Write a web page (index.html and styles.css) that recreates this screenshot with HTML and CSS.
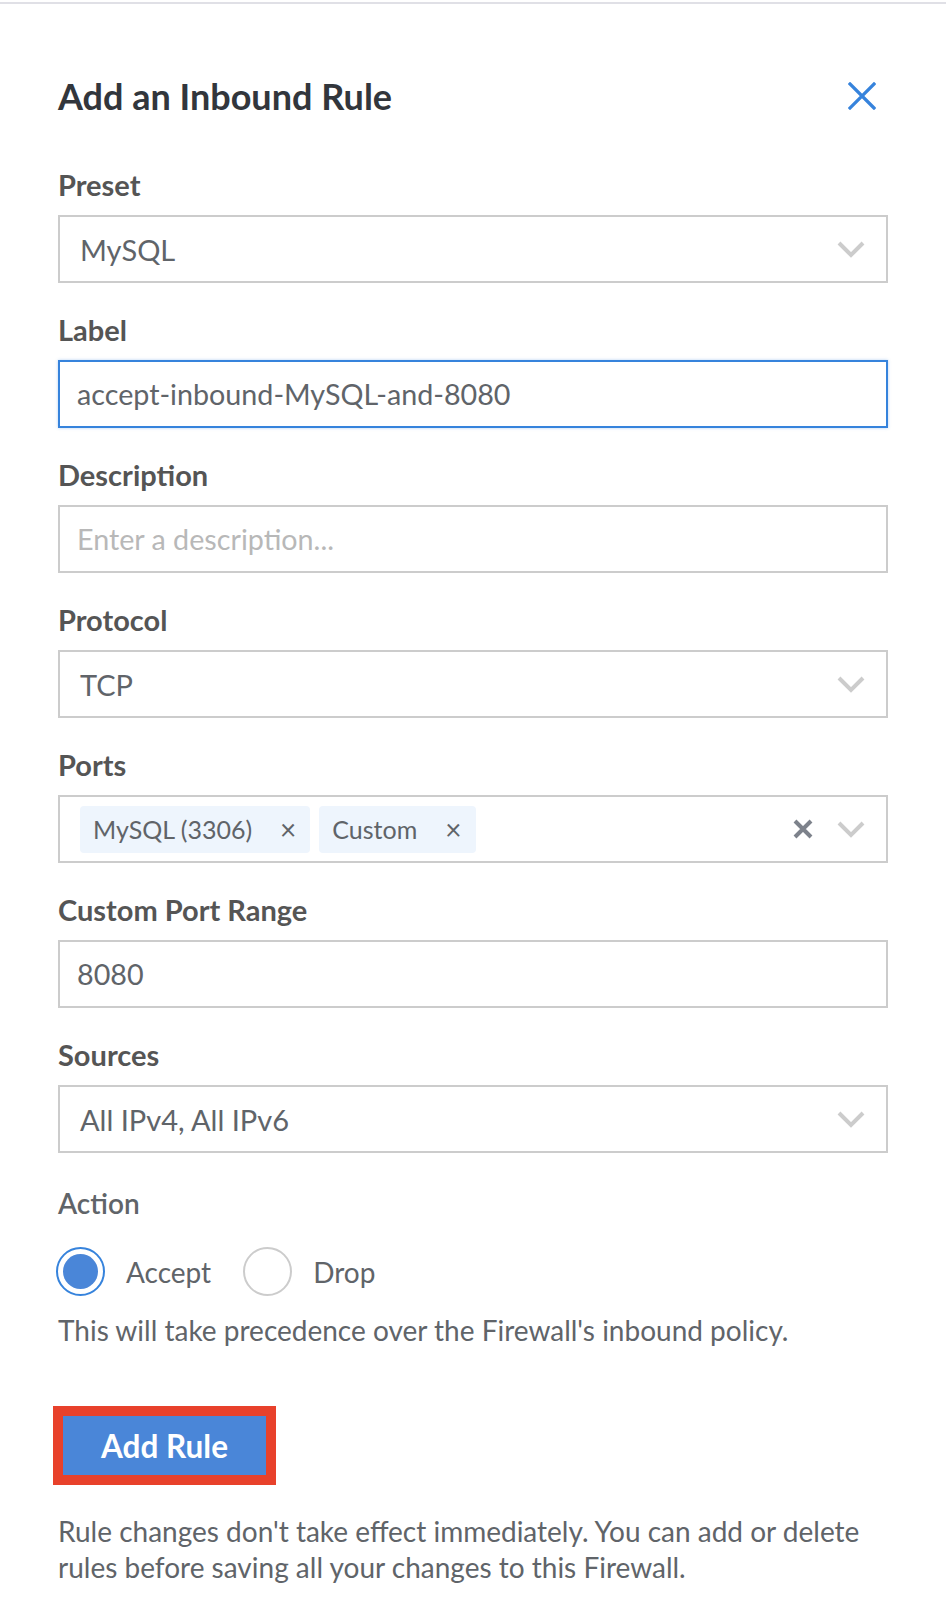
FILE: index.html
```html
<!DOCTYPE html>
<html>
<head>
<meta charset="utf-8">
<link rel="stylesheet" href="styles.css">
</head>
<body>
<div class="topline"></div>
<div class="drawer">
  <div class="header">
    <h2 class="title">Add an Inbound Rule</h2>
    <button class="close" aria-label="Close">
      <svg width="28" height="28" viewBox="0 0 28 28"><path d="M2 2 L26 26 M26 2 L2 26" stroke="#3683dc" stroke-width="3.2" stroke-linecap="square" fill="none"/></svg>
    </button>
  </div>

  <div class="field first">
    <div class="label">Preset</div>
    <div class="select">
      <span class="value">MySQL</span>
      <svg class="chev" width="28" height="18" viewBox="0 0 28 18"><path d="M2 3 L14 15 L26 3" stroke="#cccccc" stroke-width="4" fill="none"/></svg>
    </div>
  </div>

  <div class="field">
    <div class="label">Label</div>
    <div class="input focused"><span class="value">accept-inbound-MySQL-and-8080</span></div>
  </div>

  <div class="field">
    <div class="label">Description</div>
    <div class="input"><span class="placeholder">Enter a description...</span></div>
  </div>

  <div class="field">
    <div class="label">Protocol</div>
    <div class="select">
      <span class="value">TCP</span>
      <svg class="chev" width="28" height="18" viewBox="0 0 28 18"><path d="M2 3 L14 15 L26 3" stroke="#cccccc" stroke-width="4" fill="none"/></svg>
    </div>
  </div>

  <div class="field">
    <div class="label">Ports</div>
    <div class="select multi">
      <div class="chips">
        <span class="chip">MySQL (3306)<span class="chip-x">×</span></span>
        <span class="chip">Custom<span class="chip-x">×</span></span>
      </div>
      <svg class="clear" width="20" height="20" viewBox="0 0 20 20"><path d="M2 2 L18 18 M18 2 L2 18" stroke="#7d828b" stroke-width="4" fill="none"/></svg>
      <svg class="chev" width="28" height="18" viewBox="0 0 28 18"><path d="M2 3 L14 15 L26 3" stroke="#cccccc" stroke-width="4" fill="none"/></svg>
    </div>
  </div>

  <div class="field">
    <div class="label">Custom Port Range</div>
    <div class="input"><span class="value">8080</span></div>
  </div>

  <div class="field">
    <div class="label">Sources</div>
    <div class="select">
      <span class="value">All IPv4, All IPv6</span>
      <svg class="chev" width="28" height="18" viewBox="0 0 28 18"><path d="M2 3 L14 15 L26 3" stroke="#cccccc" stroke-width="4" fill="none"/></svg>
    </div>
  </div>

  <div class="field action">
    <div class="label">Action</div>
    <div class="radios">
      <span class="radio checked"><span class="dot"></span></span>
      <span class="radio-text">Accept</span>
      <span class="radio"></span>
      <span class="radio-text">Drop</span>
    </div>
    <p class="help">This will take precedence over the Firewall's inbound policy.</p>
  </div>

  <div class="actions">
    <button class="primary">Add Rule</button>
  </div>

  <p class="note">Rule changes don't take effect immediately. You can add or delete rules before saving all your changes to this Firewall.</p>
</div>
</body>
</html>
```

FILE: styles.css
```css
* { box-sizing: border-box; }
html, body { margin: 0; padding: 0; background: #ffffff; }
body { font-family: Lato, "Open Sans", sans-serif; color: #606469; }

.topline { height: 2px; margin-top: 2px; background: #e0e0e6; }

.drawer { padding: 0 58px; width: 946px; }

.header { display: flex; align-items: center; justify-content: space-between; margin-top: 70px; height: 44px; }
.title { margin: 0; font-size: 36px; line-height: 44px; font-weight: 700; color: #32363c; }
.close { border: 0; background: none; padding: 0; width: 28px; height: 28px; margin-right: 12px; display: flex; }

.field { margin-top: 30px; }
.field.first { margin-top: 50px; }
.label { font-size: 29px; line-height: 34px; font-weight: 700; color: #555555; margin-bottom: 13px; }

.select, .input { height: 68px; border: 2px solid #cccccc; display: flex; align-items: center; font-size: 29px; color: #606469; }
.input { font-size: 28.7px; }
.select { padding: 0 22px 0 20px; }
.input { padding: 0 17px; }
.input.focused { border-color: #3683dc; box-shadow: 0 0 3px rgba(54,131,220,0.35); }
.placeholder { color: #b8b8b8; }
.value { flex: 1; }
.chev { margin-left: auto; margin-right: -1px; }

.select.multi { padding-left: 20px; }
.chips { display: flex; gap: 9px; flex: 1; }
.chip { display: inline-flex; align-items: center; height: 47px; padding: 0 14px 0 13px; background: #eef5fd; border-radius: 4px; font-size: 25px; color: #606469; }
.chip-x { margin-left: 28px; font-size: 28px; color: #606469; }
.clear { margin-right: 24px; }

.action { margin-top: 33px; }
.action .label { margin-bottom: 27px; font-weight: 600; color: #606469; font-size: 28px; }
.radios { display: flex; align-items: center; height: 49px; }
.radio { width: 49px; height: 49px; border-radius: 50%; border: 2px solid #cccccc; display: flex; align-items: center; justify-content: center; }
.radio.checked { border-color: #3683dc; margin-left: -2px; }
.dot { width: 35px; height: 35px; border-radius: 50%; background: #4a86d8; }
.radio-text { font-size: 28px; color: #606469; margin-left: 21px; margin-right: 32px; }
.help { margin: 17px 0 0; font-size: 28px; line-height: 34px; color: #606469; }

.actions { margin-top: 69px; padding-left: 5px; display: flex; }
.primary { border: 0; background: #4a86d8; color: #ffffff; font-family: Lato, sans-serif; font-weight: 700; font-size: 31.5px; width: 203px; height: 59px; outline: 10px solid #e8412b; padding: 0; }

.note { margin: 38px 0 0; font-size: 28px; line-height: 36px; color: #606469; }
```
